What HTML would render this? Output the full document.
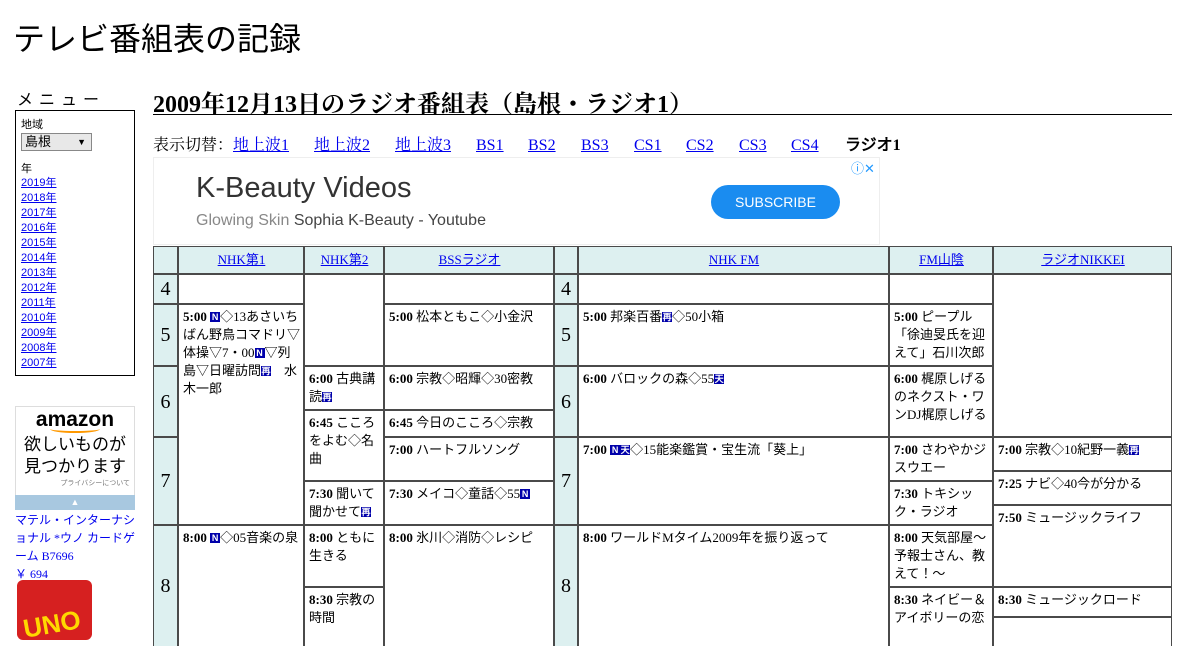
<!DOCTYPE html>
<html><head><meta charset="utf-8"><style>
body{margin:0;width:1200px;height:630px;overflow:hidden;background:#fff;font-family:"Liberation Serif","Noto Serif CJK SC","Noto Sans CJK JP",serif;color:#000;position:relative}
.a{position:absolute}
a{color:#00e;text-decoration:underline}
.g{position:absolute;left:153px;top:246px;width:1019px;height:400px;background:#4a4a4a}
.c{position:absolute;background:#fff;font-size:13px;line-height:18px;padding:3px 3px 0 4px;box-sizing:border-box;overflow:hidden;font-family:"Liberation Serif","Noto Sans CJK JP",sans-serif}
.h{background:#ddf0f0;text-align:center;padding-top:4px}
.hr{background:#ddf0f0;font-size:20px;padding:0;display:flex;align-items:center;justify-content:center}
b{font-family:"Liberation Serif",serif}
.k{display:inline-block;background:#00a;color:#fff;font-size:9px;line-height:10px;width:10px;text-align:center;font-weight:bold;vertical-align:1px;font-family:"Liberation Sans",sans-serif}
.nav{position:absolute;left:153px;top:136px;font-size:16px;line-height:20px;white-space:nowrap}
.nav span,.nav a,.nav b{display:inline-block;vertical-align:baseline}
</style></head><body>
<div class="a" style="left:13px;top:14px;font-size:32px;font-family:'Liberation Sans','Noto Sans CJK JP',sans-serif;">テレビ番組表の記録</div>
<div class="a" style="left:17px;top:86px;font-size:16px;letter-spacing:6px;font-family:'Liberation Sans','Noto Sans CJK JP',sans-serif">メニュー</div>
<div class="a" style="left:15px;top:110px;width:118px;height:264px;border:1px solid #000;font-size:11px;font-family:'Liberation Sans','Noto Sans CJK JP',sans-serif">
<div style="margin:5px 0 0 5px">地域</div>
<div style="margin:1px 0 0 5px;width:66px;height:16px;border:1px solid #888;background:#e8e8e8;font-size:13px;line-height:16px;padding-left:3px;position:relative">島根<span style="position:absolute;right:5px;font-size:9px">▼</span></div>
<div style="margin:9px 0 0 5px">年</div>
<div style="margin:0 0 0 5px;line-height:15px">
<a href="#">2019年</a><br><a href="#">2018年</a><br><a href="#">2017年</a><br><a href="#">2016年</a><br><a href="#">2015年</a><br><a href="#">2014年</a><br><a href="#">2013年</a><br><a href="#">2012年</a><br><a href="#">2011年</a><br><a href="#">2010年</a><br><a href="#">2009年</a><br><a href="#">2008年</a><br><a href="#">2007年</a></div></div>
<div class="a" style="left:15px;top:406px;width:118px;height:88px;border:1px solid #ddd;text-align:center;font-family:'Liberation Sans','Noto Sans CJK JP',sans-serif">
<div style="font-size:21px;font-weight:bold;margin-top:2px;line-height:22px">amazon</div>
<div style="width:50px;height:6px;border-bottom:2px solid #f90;border-radius:0 0 50% 50%;margin:-6px auto 0"></div>
<div style="font-size:17px;line-height:22px;margin-top:1px">欲しいものが<br>見つかります</div>
<div style="font-size:7px;color:#777;text-align:right;padding-right:4px">プライバシーについて</div></div>
<div class="a" style="left:15px;top:495px;width:120px;height:15px;background:#a8c8e0;color:#fff;text-align:center;font-size:9px;line-height:15px">▲</div>
<div class="a" style="left:15px;top:511px;width:122px;font-size:12px;line-height:18px;color:#00e;font-family:'Liberation Serif','Noto Sans CJK JP',sans-serif">マテル・インターナショナル *ウノ カードゲーム B7696<br>￥ 694</div>
<div class="a" style="left:17px;top:580px;width:75px;height:60px;background:#d62020;border-radius:6px"><div style="margin:28px 0 0 6px;color:#ffd800;font-weight:bold;font-size:26px;font-family:'Liberation Sans',sans-serif;transform:rotate(-10deg)">UNO</div></div>

<div class="a" style="left:153px;top:84px;font-size:24px;font-weight:bold;font-family:'Liberation Serif','Noto Serif CJK SC',serif">2009年12月13日のラジオ番組表（島根・ラジオ1）</div>
<div class="a" style="left:153px;top:114px;width:1019px;height:1px;background:#000"></div>
<div class="nav"><span style="width:80px">表示切替：</span><a style="width:81px;text-decoration:none" href="#"><u>地上波1</u></a><a style="width:81px;text-decoration:none" href="#"><u>地上波2</u></a><a style="width:81px;text-decoration:none" href="#"><u>地上波3</u></a><a style="width:52px;text-decoration:none" href="#"><u>BS1</u></a><a style="width:53px;text-decoration:none" href="#"><u>BS2</u></a><a style="width:53px;text-decoration:none" href="#"><u>BS3</u></a><a style="width:52px;text-decoration:none" href="#"><u>CS1</u></a><a style="width:53px;text-decoration:none" href="#"><u>CS2</u></a><a style="width:52px;text-decoration:none" href="#"><u>CS3</u></a><a style="width:54px;text-decoration:none" href="#"><u>CS4</u></a><b>ラジオ1</b></div>
<div class="a" style="left:153px;top:157px;width:727px;height:88px;border:1px solid #eee;box-sizing:border-box;font-family:'Liberation Sans',sans-serif">
<div class="a" style="left:42px;top:14px;font-size:29px;color:#333">K-Beauty Videos</div>
<div class="a" style="left:42px;top:54px;font-size:16px;color:#888">Glowing Skin <span style="color:#444">Sophia K-Beauty - Youtube</span></div>
<div class="a" style="left:557px;top:27px;width:129px;height:34px;border-radius:17px;background:#1a8cf0;color:#fff;font-size:14px;line-height:34px;text-align:center">SUBSCRIBE</div>
<div class="a" style="left:697px;top:0px;font-size:13px;color:#29f">ⓘ✕</div></div>

<div class="g">
<div class="c h" style="left:1px;top:1px;width:23px;height:26px"></div>
<div class="c h" style="left:26px;top:1px;width:124px;height:26px"><a href="#">NHK第1</a></div>
<div class="c h" style="left:152px;top:1px;width:78px;height:26px"><a href="#">NHK第2</a></div>
<div class="c h" style="left:232px;top:1px;width:168px;height:26px"><a href="#">BSSラジオ</a></div>
<div class="c h" style="left:402px;top:1px;width:22px;height:26px"></div>
<div class="c h" style="left:426px;top:1px;width:309px;height:26px"><a href="#">NHK FM</a></div>
<div class="c h" style="left:737px;top:1px;width:102px;height:26px"><a href="#">FM山陰</a></div>
<div class="c h" style="left:841px;top:1px;width:177px;height:26px"><a href="#">ラジオNIKKEI</a></div>

<div class="c hr" style="left:1px;top:29px;width:23px;height:28px">4</div>
<div class="c hr" style="left:1px;top:59px;width:23px;height:60px">5</div>
<div class="c hr" style="left:1px;top:121px;width:23px;height:69px">6</div>
<div class="c hr" style="left:1px;top:192px;width:23px;height:86px">7</div>
<div class="c hr" style="left:1px;top:280px;width:23px;height:120px">8</div>
<div class="c hr" style="left:402px;top:29px;width:22px;height:28px">4</div>
<div class="c hr" style="left:402px;top:59px;width:22px;height:60px">5</div>
<div class="c hr" style="left:402px;top:121px;width:22px;height:69px">6</div>
<div class="c hr" style="left:402px;top:192px;width:22px;height:86px">7</div>
<div class="c hr" style="left:402px;top:280px;width:22px;height:120px">8</div>

<div class="c" style="left:26px;top:29px;width:124px;height:28px"></div>
<div class="c" style="left:26px;top:59px;width:124px;height:219px"><b>5:00</b> <span class="k">N</span>◇13あさいちばん野鳥コマドリ▽体操▽7・00<span class="k">N</span>▽列島▽日曜訪問<span class="k">再</span>　水木一郎</div>
<div class="c" style="left:26px;top:280px;width:124px;height:120px"><b>8:00</b> <span class="k">N</span>◇05音楽の泉</div>

<div class="c" style="left:152px;top:29px;width:78px;height:90px"></div>
<div class="c" style="left:152px;top:121px;width:78px;height:42px"><b>6:00</b> 古典講読<span class="k">再</span></div>
<div class="c" style="left:152px;top:165px;width:78px;height:69px"><b>6:45</b> こころをよむ◇名曲</div>
<div class="c" style="left:152px;top:236px;width:78px;height:42px"><b>7:30</b> 聞いて聞かせて<span class="k">再</span></div>
<div class="c" style="left:152px;top:280px;width:78px;height:60px"><b>8:00</b> ともに生きる</div>
<div class="c" style="left:152px;top:342px;width:78px;height:60px"><b>8:30</b> 宗教の時間</div>

<div class="c" style="left:232px;top:29px;width:168px;height:28px"></div>
<div class="c" style="left:232px;top:59px;width:168px;height:60px"><b>5:00</b> 松本ともこ◇小金沢</div>
<div class="c" style="left:232px;top:121px;width:168px;height:42px"><b>6:00</b> 宗教◇昭輝◇30密教</div>
<div class="c" style="left:232px;top:165px;width:168px;height:25px"><b>6:45</b> 今日のこころ◇宗教</div>
<div class="c" style="left:232px;top:192px;width:168px;height:42px"><b>7:00</b> ハートフルソング</div>
<div class="c" style="left:232px;top:236px;width:168px;height:42px"><b>7:30</b> メイコ◇童話◇55<span class="k">N</span></div>
<div class="c" style="left:232px;top:280px;width:168px;height:120px"><b>8:00</b> 氷川◇消防◇レシピ</div>

<div class="c" style="left:426px;top:29px;width:309px;height:28px"></div>
<div class="c" style="left:426px;top:59px;width:309px;height:60px"><b>5:00</b> 邦楽百番<span class="k">再</span>◇50小箱</div>
<div class="c" style="left:426px;top:121px;width:309px;height:69px"><b>6:00</b> バロックの森◇55<span class="k">天</span></div>
<div class="c" style="left:426px;top:192px;width:309px;height:86px"><b>7:00</b> <span class="k">N</span><span class="k">天</span>◇15能楽鑑賞・宝生流「葵上」</div>
<div class="c" style="left:426px;top:280px;width:309px;height:120px"><b>8:00</b> ワールドMタイム2009年を振り返って</div>

<div class="c" style="left:737px;top:29px;width:102px;height:28px"></div>
<div class="c" style="left:737px;top:59px;width:102px;height:60px"><b>5:00</b> ピープル「徐迪旻氏を迎えて」石川次郎</div>
<div class="c" style="left:737px;top:121px;width:102px;height:69px"><b>6:00</b> 梶原しげるのネクスト・ワンDJ梶原しげる</div>
<div class="c" style="left:737px;top:192px;width:102px;height:42px"><b>7:00</b> さわやかジスウエー</div>
<div class="c" style="left:737px;top:236px;width:102px;height:42px"><b>7:30</b> トキシック・ラジオ</div>
<div class="c" style="left:737px;top:280px;width:102px;height:60px"><b>8:00</b> 天気部屋～予報士さん、教えて！～</div>
<div class="c" style="left:737px;top:342px;width:102px;height:60px"><b>8:30</b> ネイビー＆アイボリーの恋</div>

<div class="c" style="left:841px;top:29px;width:177px;height:161px"></div>
<div class="c" style="left:841px;top:192px;width:177px;height:32px"><b>7:00</b> 宗教◇10紀野一義<span class="k">再</span></div>
<div class="c" style="left:841px;top:226px;width:177px;height:32px"><b>7:25</b> ナビ◇40今が分かる</div>
<div class="c" style="left:841px;top:260px;width:177px;height:80px"><b>7:50</b> ミュージックライフ</div>
<div class="c" style="left:841px;top:342px;width:177px;height:28px"><b>8:30</b> ミュージックロード</div>
<div class="c" style="left:841px;top:372px;width:177px;height:30px"></div>
</div>
</body></html>
